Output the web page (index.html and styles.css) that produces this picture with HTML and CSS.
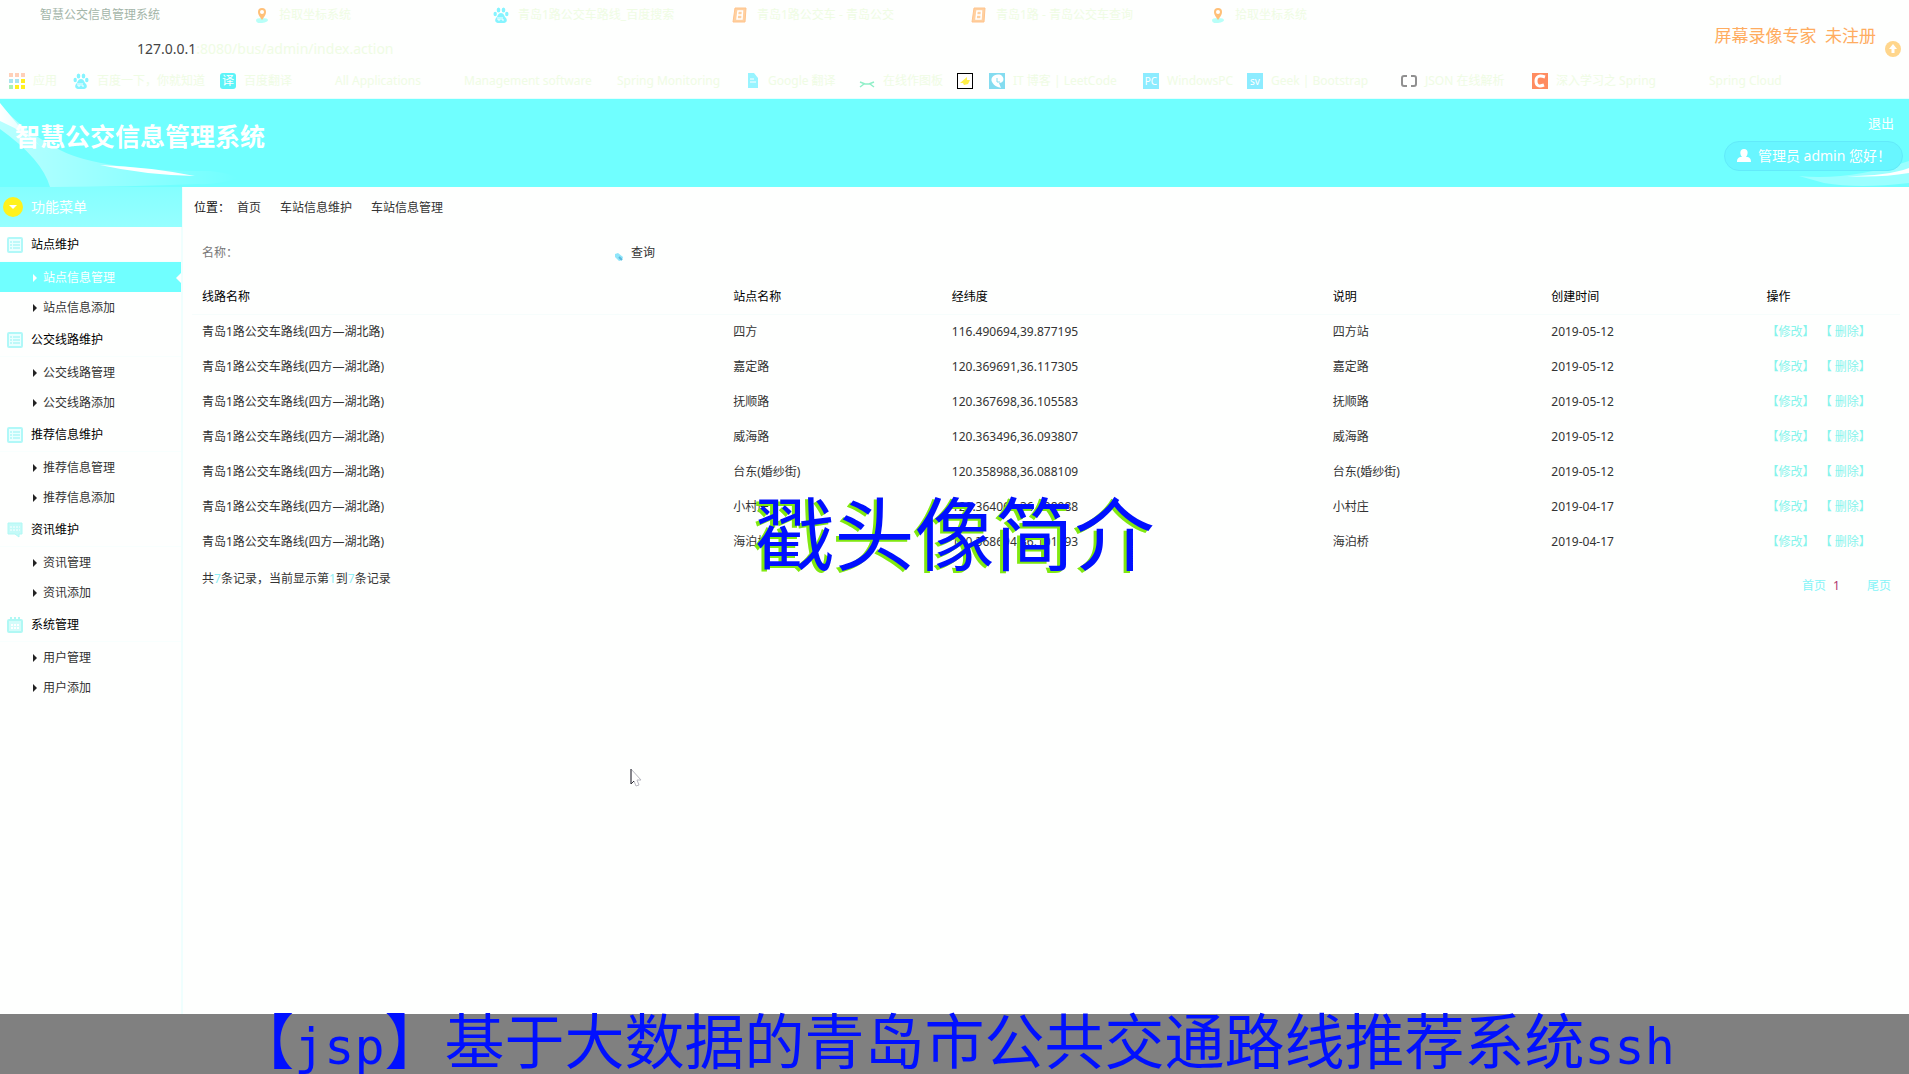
FILE: index.html
```html
<!DOCTYPE html>
<html lang="zh-CN">
<head>
<meta charset="utf-8">
<title>智慧公交信息管理系统</title>
<link rel="stylesheet" href="styles.css">
</head>
<body>
<svg class="defs" aria-hidden="true">
  <symbol id="pin" viewBox="0 0 16 16"><path d="M2 13q0-2 6-2t6 2-6 3-6-3" fill="#b8fff8"/><path d="M8 13C5 9 4 7 4 5a4 4 0 0 1 8 0c0 2-1 4-4 8z" fill="#ffc078"/><circle cx="8" cy="5" r="2" fill="#fff"/></symbol>
  <symbol id="paw" viewBox="0 0 16 16"><g fill="#86f4ff"><ellipse cx="5.500" cy="3" rx="1.800" ry="2.500"/><ellipse cx="10.500" cy="3" rx="1.800" ry="2.500"/><ellipse cx="2.200" cy="7" rx="1.700" ry="2.200"/><ellipse cx="13.800" cy="7" rx="1.700" ry="2.200"/><path d="M8 6c3 0 3 3 5 5 2 3 0 5-3 5H6c-3 0-5-2-3-5 2-2 2-5 5-5z"/></g><path d="M5 10v3h2v-3M9 10v3h2" stroke="#fff" fill="none"/></symbol>
  <symbol id="eight" viewBox="0 0 16 16"><path d="M3 1h11l-1 14H1L3 1z" fill="#ffd0a0" stroke="#ffc48c"/><path d="M6 4h4.500l-.5 8H5zM5.500 8h5" fill="none" stroke="#fff" stroke-width="1.500"/></symbol>
  <symbol id="list" viewBox="0 0 16 16"><rect x="1" y="1" width="14" height="14" rx="1" fill="#eaffff" stroke="#b0f8f8" stroke-width="2"/><path d="M3 5h2m1 0h7M3 8h2m1 0h7M3 11h2m1 0h7" stroke="#b0f8f8" stroke-width="1.500"/></symbol>
  <symbol id="chat" viewBox="0 0 16 16"><path d="M1 1h14v11h-3v3l-4-3H1z" fill="#c4faf8" stroke="#b0f8f4"/><path d="M3 5h10M3 8h10" stroke="#fff" stroke-dasharray="2 1"/></symbol>
  <symbol id="calendar" viewBox="0 0 16 16"><path d="M4 0v3m4-3v3m4-3v3" stroke="#b0f8f4" stroke-width="2"/><rect x="1" y="3" width="14" height="12" rx="1" fill="#d4fcfa" stroke="#b0f8f4" stroke-width="2"/><path d="M4 8h8M4 11h8" stroke="#fff" stroke-width="2" stroke-dasharray="2 1"/></symbol>
</svg>

<div class="browser">
  <div class="tabs">
    <div class="tab current"><span class="ico"></span><span>智慧公交信息管理系统</span></div>
    <div class="tab"><svg class="ico"><use href="#pin"/></svg><span>拾取坐标系统</span></div>
    <div class="tab"><svg class="ico"><use href="#paw"/></svg><span>青岛1路公交车路线_百度搜索</span></div>
    <div class="tab"><svg class="ico"><use href="#eight"/></svg><span>青岛1路公交车 - 青岛公交</span></div>
    <div class="tab"><svg class="ico"><use href="#eight"/></svg><span>青岛1路 - 青岛公交车查询</span></div>
    <div class="tab"><svg class="ico"><use href="#pin"/></svg><span>拾取坐标系统</span></div>
  </div>
  <div class="address">
    <span><b>127.0.0.1</b>:8080/bus/admin/index.action</span>
    <svg class="ico" viewBox="0 0 16 16"><circle cx="8" cy="8" r="8" fill="#ffd68c"/><path d="M8 3l4 5H9.500v4h-3V8H4z" fill="#fff"/></svg>
  </div>
  <nav class="bookmarks">
    <a href="#"><svg class="ico" viewBox="0 0 16 16"><g stroke-width="4" stroke-dasharray="4 2"><path d="M0 2h16" stroke="#ffd0b8"/><path d="M0 8h10" stroke="#a8e4f0"/><path d="M12 8h4" stroke="#ffee20"/><path d="M0 14h4" stroke="#a8f0b8"/><path d="M6 14h10" stroke="#fff020"/></g></svg>应用</a>
    <a href="#"><svg class="ico"><use href="#paw"/></svg>百度一下，你就知道</a>
    <a href="#"><span class="ico translate">译</span>百度翻译</a>
    <a href="#"><span class="ico"></span>All Applications</a>
    <a href="#"><span class="ico"></span>Management software</a>
    <a href="#"><span class="ico"></span>Spring Monitoring</a>
    <a href="#"><svg class="ico" viewBox="0 0 16 16"><path d="M4 0h6l4 5v10H4z" fill="#98f4ff"/><path d="M6 6h4M6 9h6" stroke="#fff"/></svg>Google 翻译</a>
    <a href="#"><svg class="ico" viewBox="0 0 16 16"><path d="M1 9l5 2h4l5-2M1 14l4-3m6 0l4 3" stroke="#90efc8" stroke-width="1.500" fill="none"/></svg>在线作图板</a>
    <a href="#"><svg class="ico" viewBox="0 0 16 16"><rect x=".5" y=".5" width="15" height="15" fill="#fff" stroke="#000"/><path d="M3 10l7-6v3h3l-2 4-4 1-1-2z" fill="#fff04a"/></svg></a>
    <a href="#"><svg class="ico" viewBox="0 0 16 16"><path d="M0 0h16v16H0z" fill="#84dcf0"/><path d="M12 2C5 0 1 5 3 9s6 5 9 6l-2-5c5 0 6-5 2-8z" fill="#fff"/><path d="M8 5v4h3" stroke="#84dcf0" fill="none"/></svg>IT 博客 | LeetCode</a>
    <a href="#"><span class="ico badge">PC</span>WindowsPC</a>
    <a href="#"><span class="ico badge">sv</span>Geek | Bootstrap</a>
    <a href="#"><svg class="ico" viewBox="0 0 16 16"><path d="M6 3H3Q1 3 1 5v6q0 2 2 2h3m4-10h3q2 0 2 2v6q0 2-2 2h-3" stroke="#909090" stroke-width="2" fill="none"/></svg>JSON 在线解析</a>
    <a href="#"><svg class="ico" viewBox="0 0 16 16"><path d="M0 0h16v16H0z" fill="#ff8c60"/><path d="M13 4Q4 1 4 8t8 4" stroke="#fff" stroke-width="3" fill="none"/></svg>深入学习之 Spring</a>
    <a href="#"><span class="ico"></span>Spring Cloud</a>
  </nav>
  <div class="recorder">屏幕录像专家&ensp;未注册</div>
</div>

<header class="banner">
  <svg class="swoosh" viewBox="0 0 240 88" aria-hidden="true">
    <defs>
      <linearGradient id="fade"><stop offset="0" stop-color="#fff" stop-opacity=".5"/><stop offset="1" stop-color="#fff" stop-opacity="0"/></linearGradient>
      <linearGradient id="flare"><stop offset="0" stop-color="#fff"/><stop offset="1" stop-color="#fff" stop-opacity=".2"/></linearGradient>
    </defs>
    <path d="M0 5q20 25 60 46t150 21q20 2 28 7-20 7-40 6-70 3-148 3Q42 60 0 30z" fill="url(#fade)"/>
    <path d="M0 4l18 22 32 30Q28 34 0 22z" fill="url(#flare)"/>
    <path d="M100 66q50 2 95 11-50-1-95-11z" fill="#fff"/>
  </svg>
  <svg class="swoosh right" viewBox="0 0 110 88" aria-hidden="true">
    <path d="M0 77q50 5 110-15v22q-50 6-85 0z" fill="#fff" opacity=".3"/>
    <path d="M48 77q40 0 62-8v5q-30 5-62 3z" fill="#fff"/>
  </svg>
  <h1>智慧公交信息管理系统</h1>
  <div class="account">
    <a href="#">退出</a>
    <div class="user"><svg class="person" viewBox="0 0 14 14" aria-hidden="true"><path d="M7 0c5 0 4 6 2 8 4 0 5 2 5 5H0c0-3 1-5 5-5C3 6 2 0 7 0z" fill="#fff"/></svg>管理员 admin 您好！</div>
  </div>
</header>

<div class="layout">
  <aside class="sidebar">
    <h2><svg class="round" viewBox="0 0 20 20" aria-hidden="true"><circle cx="10" cy="10" r="10" fill="#fff21c"/><path d="M6 8h8l-4 4z" fill="#fff"/></svg>功能菜单</h2>
    <h3><svg class="ico"><use href="#list"/></svg>站点维护</h3>
    <ul><li class="active"><a href="#">站点信息管理</a></li><li><a href="#">站点信息添加</a></li></ul>
    <h3><svg class="ico"><use href="#list"/></svg>公交线路维护</h3>
    <ul><li><a href="#">公交线路管理</a></li><li><a href="#">公交线路添加</a></li></ul>
    <h3><svg class="ico"><use href="#list"/></svg>推荐信息维护</h3>
    <ul><li><a href="#">推荐信息管理</a></li><li><a href="#">推荐信息添加</a></li></ul>
    <h3><svg class="ico"><use href="#chat"/></svg>资讯维护</h3>
    <ul><li><a href="#">资讯管理</a></li><li><a href="#">资讯添加</a></li></ul>
    <h3><svg class="ico"><use href="#calendar"/></svg>系统管理</h3>
    <ul><li><a href="#">用户管理</a></li><li><a href="#">用户添加</a></li></ul>
  </aside>

  <main class="content">
    <nav class="crumbs"><span>位置：</span><a href="#">首页</a><a href="#">车站信息维护</a><a href="#">车站信息管理</a></nav>
    <form class="search">
      <label for="name">名称：</label>
      <input id="name" type="text">
      <button type="button"><svg class="ico" viewBox="0 0 16 16" aria-hidden="true"><path d="M5 9l3-1 5 4-1 3-3 1-4-4z" fill="#8fe6fa"/><path d="M9 12l3 3" stroke="#5cb8dc" stroke-width="2"/></svg>查询</button>
    </form>
    <table>
      <colgroup><col class="c-line"><col class="c-name"><col class="c-pos"><col class="c-note"><col class="c-date"><col></colgroup>
      <thead><tr><th>线路名称</th><th>站点名称</th><th>经纬度</th><th>说明</th><th>创建时间</th><th>操作</th></tr></thead>
      <tbody>
        <tr><td>青岛1路公交车路线(四方—湖北路)</td><td>四方</td><td>116.490694,39.877195</td><td>四方站</td><td>2019-05-12</td><td><a href="#">【修改】</a> <a href="#">【 删除】</a></td></tr>
        <tr><td>青岛1路公交车路线(四方—湖北路)</td><td>嘉定路</td><td>120.369691,36.117305</td><td>嘉定路</td><td>2019-05-12</td><td><a href="#">【修改】</a> <a href="#">【 删除】</a></td></tr>
        <tr><td>青岛1路公交车路线(四方—湖北路)</td><td>抚顺路</td><td>120.367698,36.105583</td><td>抚顺路</td><td>2019-05-12</td><td><a href="#">【修改】</a> <a href="#">【 删除】</a></td></tr>
        <tr><td>青岛1路公交车路线(四方—湖北路)</td><td>威海路</td><td>120.363496,36.093807</td><td>威海路</td><td>2019-05-12</td><td><a href="#">【修改】</a> <a href="#">【 删除】</a></td></tr>
        <tr><td>青岛1路公交车路线(四方—湖北路)</td><td>台东(婚纱街)</td><td>120.358988,36.088109</td><td>台东(婚纱街)</td><td>2019-05-12</td><td><a href="#">【修改】</a> <a href="#">【 删除】</a></td></tr>
        <tr><td>青岛1路公交车路线(四方—湖北路)</td><td>小村庄</td><td>120.364061,36.098988</td><td>小村庄</td><td>2019-04-17</td><td><a href="#">【修改】</a> <a href="#">【 删除】</a></td></tr>
        <tr><td>青岛1路公交车路线(四方—湖北路)</td><td>海泊桥</td><td>120.368694,36.101093</td><td>海泊桥</td><td>2019-04-17</td><td><a href="#">【修改】</a> <a href="#">【 删除】</a></td></tr>
      </tbody>
    </table>
    <div class="summary">
      <p>共<i>7</i>条记录，当前显示第<i>1</i>到<i>7</i>条记录</p>
      <div class="pager"><a href="#">首页</a><b>1</b><a class="last" href="#">尾页</a></div>
    </div>
  </main>
</div>

<footer class="caption">【<span>jsp</span>】基于大数据的青岛市公共交通路线推荐系统<span>ssh</span></footer>
<div class="stamp">戳头像简介</div>
<svg class="cursor" viewBox="0 0 12 19" aria-hidden="true"><path d="M1 1v15l3-3 2 5 3-1-2-5h4z" fill="#fff" stroke="#b8b8c0"/><path d="M1 1v15l3-3" fill="none" stroke="#303038"/></svg>
</body>
</html>
```
FILE: styles.css
```css
* { box-sizing: border-box; }
body {
  margin: 0;
  min-height: 100vh;
  display: flex;
  flex-direction: column;
  position: relative;
  background: #fefffe;
  color: #333;
  font: 12px/20px "Noto Sans", "Noto Sans CJK SC", sans-serif;
}
h1, h2, h3, ul, p { margin: 0; padding: 0; font-weight: 400; }
ul { list-style: none; }
a { color: inherit; text-decoration: none; }
.defs { display: none; }
.ico { width: 16px; height: 16px; flex: none; }

/* browser chrome */
.browser { height: 99px; position: relative; color: #effce4; white-space: nowrap; border-bottom: 1px solid #e4ffff; }
.tabs { display: flex; height: 30px; padding-left: 15px; }
.tab { width: 239px; display: flex; align-items: center; gap: 9px; overflow: hidden; }
.tab.current { color: #a3b5a8; }
.address { height: 38px; display: flex; align-items: center; justify-content: space-between; padding: 0 8px 0 137px; font-size: 14px; }
.address b { font-weight: 400; color: #444; }
.bookmarks {
  height: 26px;
  display: grid;
  grid-template-columns: 64px 147px 91px 129px 153px 151px 115px 98px 32px 154px 104px 154px 131px 153px 1fr;
  align-items: center;
  padding-left: 9px;
}
.bookmarks a { display: flex; align-items: center; gap: 8px; }
.translate { background: #5cf4f8; color: #fff; border-radius: 3px; line-height: 16px; text-align: center; }
.badge { background: #8cecff; color: #fff; font-size: 10px; line-height: 16px; text-align: center; }
.recorder { position: absolute; right: 33px; top: 23px; font-size: 17px; line-height: 26px; color: #ffac60; }

/* banner */
.banner { height: 88px; position: relative; display: flex; justify-content: space-between; background: #70ffff; color: #fff; }
.swoosh { position: absolute; left: 0; top: 0; width: 240px; height: 88px; }
.swoosh.right { left: auto; right: 0; width: 110px; }
.banner h1 { position: relative; padding-left: 15px; font-size: 25px; line-height: 74px; font-weight: 700; }
.account { position: relative; display: flex; flex-direction: column; align-items: flex-end; padding: 14px 6px 0 0; gap: 8px; }
.account a { padding-right: 9px; font-size: 13px; }
.user { height: 30px; display: flex; align-items: center; gap: 7px; padding: 0 11px 0 12px; border: 1px solid #62eafa; border-radius: 15px; background: #68f6ff; font-size: 14px; }
.person { width: 14px; height: 14px; }

/* columns */
.layout { flex: 1; display: flex; }
.sidebar { width: 183px; border-right: 2px solid #effffe; }
.sidebar h2 { height: 40px; margin-right: -1px; display: flex; align-items: center; gap: 8px; padding-left: 3px; background: linear-gradient(#84ffff, #96ffff); color: #fff; font-size: 14px; }
.round { width: 20px; height: 20px; }
.sidebar h3 { height: 35px; display: flex; align-items: center; gap: 8px; padding: 2px 0 0 7px; font-size: 12px; color: #000; border-bottom: 1px solid #f8fffe; }
.sidebar li { height: 30px; display: flex; align-items: center; justify-content: space-between; padding: 2px 0 0 33px; }
.sidebar li a { display: flex; align-items: center; gap: 6px; }
.sidebar li a::before { content: ""; border: 4px solid transparent; border-left-color: #222; border-right-width: 0; }
.sidebar .active { background: #70ffff; color: #fff; }
.sidebar .active a::before { border-left-color: #fff; }
.sidebar .active::after { content: ""; border: 5px solid transparent; border-right-color: #fff; border-left-width: 0; }

.content { flex: 1; min-width: 0; }
.crumbs { height: 40px; display: flex; align-items: center; padding: 2px 0 0 11px; }
.crumbs span { margin-right: 7px; color: #111; }
.crumbs a { margin-right: 19px; }
.search { height: 52px; display: flex; align-items: center; padding-left: 19px; }
.search label { width: 48px; color: #777; }
.search input { width: 345px; height: 32px; border: 0; background: transparent; }
.search button { display: flex; align-items: center; gap: 5px; margin-left: 15px; padding: 0; border: 0; background: none; color: #333; font: inherit; }
table { width: calc(100% - 18px); margin-left: 9px; table-layout: fixed; border-collapse: collapse; }
th, td { height: 35px; padding: 1px 0 0 10px; text-align: left; white-space: nowrap; }
th { font-weight: 400; color: #000; border-bottom: 1px solid #f6fdfc; }
td a { color: #86f4ec; }
td a + a { margin-left: 2px; }
.c-line { width: 31.1%; }
.c-name { width: 12.8%; }
.c-pos { width: 22.3%; }
.c-note { width: 12.8%; }
.c-date { width: 12.6%; }
.summary { display: flex; justify-content: space-between; padding: 10px 18px 0 19px; }
.summary i { font-style: normal; color: #8eeef4; }
.pager { display: flex; padding-top: 7px; gap: 7px; color: #86f4f8; }
.pager b { font-weight: 400; color: #b03870; }
.pager .last { margin-left: 20px; }

/* overlays and caption */
.caption { height: 60px; background: #808080; color: #0010ff; text-align: center; white-space: nowrap; font-size: 60px; line-height: 48px; font-family: "Noto Sans CJK SC", sans-serif; }
.caption span { font-family: "DejaVu Sans Mono", monospace; font-size: 50px; }
.stamp { position: absolute; left: 0; right: 0; top: 479px; text-align: center; font: 80px/100px "Noto Sans CJK SC", sans-serif; color: #0010ff; text-shadow: -3px 2px #80e810; pointer-events: none; }
.cursor { position: absolute; left: 630px; top: 768px; width: 12px; height: 19px; }
```
